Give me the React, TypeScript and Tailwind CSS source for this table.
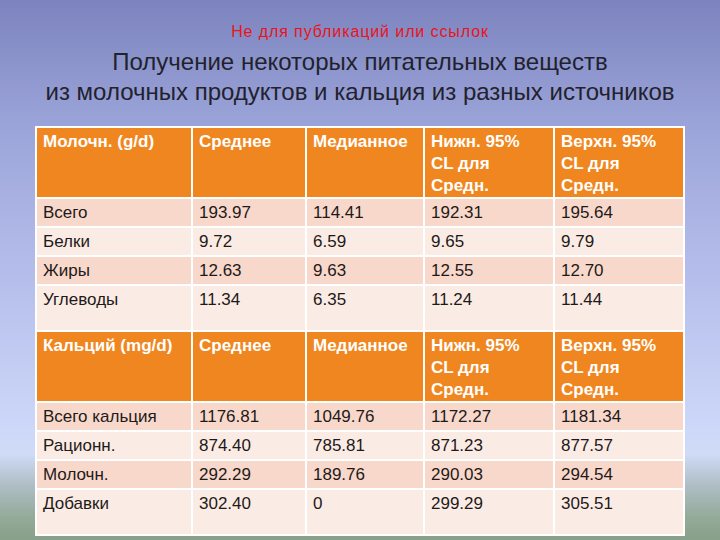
import React from 'react';

type Row = { cells: string[]; tall?: boolean };

const headers1 = ['Молочн. (g/d)', 'Среднее', 'Медианное', 'Нижн. 95%', 'Верхн. 95%'];
const headers2 = ['Кальций (mg/d)', 'Среднее', 'Медианное', 'Нижн. 95%', 'Верхн. 95%'];

const dairy: Row[] = [
  { cells: ['Всего', '193.97', '114.41', '192.31', '195.64'] },
  { cells: ['Белки', '9.72', '6.59', '9.65', '9.79'] },
  { cells: ['Жиры', '12.63', '9.63', '12.55', '12.70'] },
  { cells: ['Углеводы', '11.34', '6.35', '11.24', '11.44'], tall: true },
];

const calcium: Row[] = [
  { cells: ['Всего кальция', '1176.81', '1049.76', '1172.27', '1181.34'] },
  { cells: ['Рационн.', '874.40', '785.81', '871.23', '877.57'] },
  { cells: ['Молочн.', '292.29', '189.76', '290.03', '294.54'] },
  { cells: ['Добавки', '302.40', '0', '299.29', '305.51'], tall: true },
];

const widths = ['w-[156px]', 'w-[114px]', 'w-[118px]', 'w-[130px]', 'w-[130px]'];

const HeaderRow = ({ cells }: { cells: string[] }) => (
  <tr className="h-[71px] bg-[#f0861f]">
    {cells.map((c, i) => (
      <td
        key={i}
        className={`${widths[i]} border-2 border-white align-top pl-[6px] pr-1 pt-[3px] text-[17px] font-bold leading-[22px] text-white`}
      >
        {i >= 3 ? (
          <>
            {c}
            <br />
            CL для
            <br />
            Средн.
          </>
        ) : (
          c
        )}
      </td>
    ))}
  </tr>
);

const BodyRow = ({ row, index }: { row: Row; index: number }) => (
  <tr className={`${row.tall ? 'h-[46px]' : 'h-[29px]'} ${index % 2 === 0 ? 'bg-[#f9d8cc]' : 'bg-[#fbebe5]'}`}>
    {row.cells.map((c, i) => (
      <td
        key={i}
        className={`${widths[i]} border-2 border-white align-top pl-[6px] pt-[4px] text-[17px] leading-[20px] text-[#1e1a18]`}
      >
        {c}
      </td>
    ))}
  </tr>
);

export default function App() {
  return (
    <div className="w-[720px] h-[540px] overflow-hidden bg-[linear-gradient(to_bottom,#7c83be_0%,#9aa3d8_22%,#b4bdea_50%,#ccd6f8_78%,#d0dbf8_84%,#aebdc4_90%,#93aa98_96%,#88a088_100%)] font-['Liberation_Sans',Arial,sans-serif]">
      <div className="pt-[22px] text-center text-[16px] leading-[20px] tracking-[0.9px] text-[#e8141c]">
        Не для публикаций или ссылок
      </div>
      <h1 className="mt-[5px] text-center text-[24px] leading-[30px] text-[#22222e]">
        Получение некоторых питательных веществ
        <br />
        из молочных продуктов и кальция из разных источников
      </h1>
      <div className="mt-[19px] pl-[35px]">
        <table className="table-fixed border-collapse border-2 border-white">
          <tbody>
            <HeaderRow cells={headers1} />
            {dairy.map((r, i) => (
              <BodyRow key={i} row={r} index={i} />
            ))}
            <HeaderRow cells={headers2} />
            {calcium.map((r, i) => (
              <BodyRow key={i} row={r} index={i} />
            ))}
          </tbody>
        </table>
      </div>
    </div>
  );
}
